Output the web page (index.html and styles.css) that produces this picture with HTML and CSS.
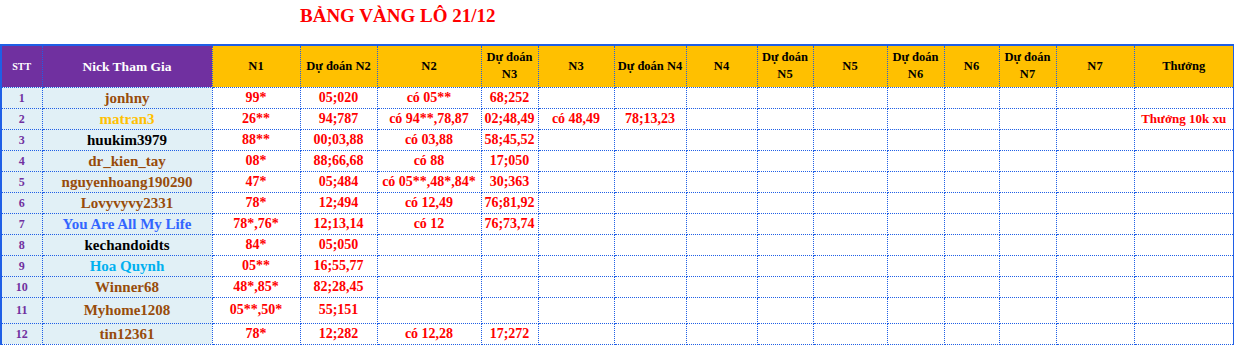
FILE: index.html
```html
<!DOCTYPE html>
<html>
<head>
    <meta charset="utf-8">
    <link rel="stylesheet" href="styles.css">
</head>
<body>

<div class="title">BẢNG VÀNG LÔ 21/12</div>

<table class="board">
    <colgroup>
        <col style="width:41px">
        <col style="width:170px">
        <col style="width:88px">
        <col style="width:77px">
        <col style="width:104px">
        <col style="width:57px">
        <col style="width:76px">
        <col style="width:72px">
        <col style="width:71px">
        <col style="width:56px">
        <col style="width:74px">
        <col style="width:57px">
        <col style="width:55px">
        <col style="width:57px">
        <col style="width:78px">
        <col style="width:100px">
    </colgroup>
    <tr class="head">
        <th class="purple stt">STT</th>
        <th class="purple">Nick Tham Gia</th>
        <th>N1</th>
        <th>Dự đoán N2</th>
        <th>N2</th>
        <th>Dự đoán N3</th>
        <th>N3</th>
        <th>Dự đoán N4</th>
        <th>N4</th>
        <th>Dự đoán N5</th>
        <th>N5</th>
        <th>Dự đoán N6</th>
        <th>N6</th>
        <th>Dự đoán N7</th>
        <th>N7</th>
        <th>Thưởng</th>
    </tr>
    <tr>
        <td class="num">1</td><td class="nick brown">jonhny</td>
        <td>99*</td><td>05;020</td><td>có 05**</td><td>68;252</td>
        <td></td><td></td><td></td><td></td><td></td><td></td><td></td><td></td><td></td><td></td>
    </tr>
    <tr>
        <td class="num">2</td><td class="nick gold">matran3</td>
        <td>26**</td><td>94;787</td><td>có 94**,78,87</td><td>02;48,49</td>
        <td>có 48,49</td><td>78;13,23</td><td></td><td></td><td></td><td></td><td></td><td></td><td></td><td class="prize">Thưởng 10k xu</td>
    </tr>
    <tr>
        <td class="num">3</td><td class="nick black">huukim3979</td>
        <td>88**</td><td>00;03,88</td><td>có 03,88</td><td>58;45,52</td>
        <td></td><td></td><td></td><td></td><td></td><td></td><td></td><td></td><td></td><td></td>
    </tr>
    <tr>
        <td class="num">4</td><td class="nick brown">dr_kien_tay</td>
        <td>08*</td><td>88;66,68</td><td>có 88</td><td>17;050</td>
        <td></td><td></td><td></td><td></td><td></td><td></td><td></td><td></td><td></td><td></td>
    </tr>
    <tr>
        <td class="num">5</td><td class="nick brown">nguyenhoang190290</td>
        <td>47*</td><td>05;484</td><td>có 05**,48*,84*</td><td>30;363</td>
        <td></td><td></td><td></td><td></td><td></td><td></td><td></td><td></td><td></td><td></td>
    </tr>
    <tr>
        <td class="num">6</td><td class="nick brown">Lovyvyvy2331</td>
        <td>78*</td><td>12;494</td><td>có 12,49</td><td>76;81,92</td>
        <td></td><td></td><td></td><td></td><td></td><td></td><td></td><td></td><td></td><td></td>
    </tr>
    <tr>
        <td class="num">7</td><td class="nick blue">You Are All My Life</td>
        <td>78*,76*</td><td>12;13,14</td><td>có 12</td><td>76;73,74</td>
        <td></td><td></td><td></td><td></td><td></td><td></td><td></td><td></td><td></td><td></td>
    </tr>
    <tr>
        <td class="num">8</td><td class="nick black">kechandoidts</td>
        <td>84*</td><td>05;050</td><td></td><td></td>
        <td></td><td></td><td></td><td></td><td></td><td></td><td></td><td></td><td></td><td></td>
    </tr>
    <tr>
        <td class="num">9</td><td class="nick cyan">Hoa Quynh</td>
        <td>05**</td><td>16;55,77</td><td></td><td></td>
        <td></td><td></td><td></td><td></td><td></td><td></td><td></td><td></td><td></td><td></td>
    </tr>
    <tr>
        <td class="num">10</td><td class="nick brown">Winner68</td>
        <td>48*,85*</td><td>82;28,45</td><td></td><td></td>
        <td></td><td></td><td></td><td></td><td></td><td></td><td></td><td></td><td></td><td></td>
    </tr>
    <tr class="tall">
        <td class="num">11</td><td class="nick brown">Myhome1208</td>
        <td>05**,50*</td><td>55;151</td><td></td><td></td>
        <td></td><td></td><td></td><td></td><td></td><td></td><td></td><td></td><td></td><td></td>
    </tr>
    <tr>
        <td class="num">12</td><td class="nick brown">tin12361</td>
        <td>78*</td><td>12;282</td><td>có 12,28</td><td>17;272</td>
        <td></td><td></td><td></td><td></td><td></td><td></td><td></td><td></td><td></td><td></td>
    </tr>
</table>

</body>
</html>
```

FILE: styles.css
```css
* {
    box-sizing: border-box;
}

body {
    margin: 0;
    background-color: #ffffff;
    font-family: "Liberation Serif", "Times New Roman", serif;
}

.title {
    height: 44px;
    padding: 5px 0 0 300px;
    color: #ff0000;
    font-size: 19px;
    font-weight: bold;
}

.board {
    width: 1233px;
    table-layout: fixed;
    border-collapse: collapse;
    border-top: 2px solid #1f5fe6;
    border-left: 2px solid #1f5fe6;
    border-right: 2px solid #1f5fe6;
}

.board th,
.board td {
    border: 1px dotted #1f5fe6;
    padding: 0 2px;
    text-align: center;
    vertical-align: middle;
    font-weight: bold;
    white-space: normal;
}

.head th {
    height: 42px;
    background-color: #ffc000;
    color: #000000;
    font-size: 12.5px;
    line-height: 17px;
}

.head th.purple {
    background-color: #7030a0;
    color: #ffffff;
    font-size: 13.5px;
}

.head th.stt {
    font-size: 10px;
}

.board td {
    height: 21px;
    color: #ff0000;
    font-size: 14px;
    line-height: 16px;
    white-space: nowrap;
}

.board tr.tall td {
    height: 26px;
}

.board td.num,
.board td.nick {
    background-color: #e1f0f6;
}

.board td.num {
    color: #7030a0;
    font-size: 12px;
}

.board td.nick {
    font-size: 15px;
}

.board td.prize {
    font-size: 13px;
}

.nick.brown {
    color: #984c0b;
}

.nick.gold {
    color: #ffc000;
}

.nick.black {
    color: #000000;
}

.nick.blue {
    color: #3366ff;
}

.nick.cyan {
    color: #00b0f0;
}
```
